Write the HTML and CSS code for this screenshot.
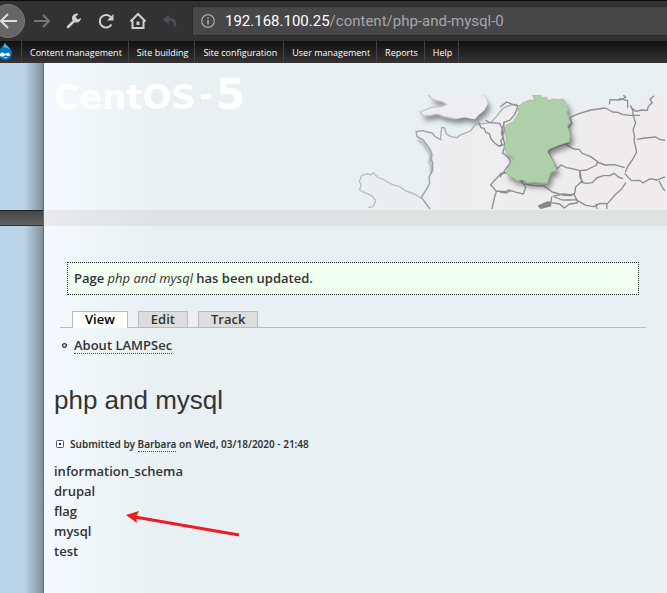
FILE: index.html
```html
<!DOCTYPE html>
<html lang="en">
<head>
<meta charset="utf-8">
<title>php and mysql</title>
<link rel="stylesheet" href="styles.css">
</head>
<body>
<div class="browser">
  <button class="tool back" aria-label="Back"><svg width="34" height="34" viewBox="0 0 34 34"><circle cx="17" cy="17" r="16.5" fill="#666" stroke="#777"/><path d="M26 17H10M17 10l-7 7 7 7" fill="none" stroke="#ddd" stroke-width="2"/></svg></button>
  <button class="tool" aria-label="Forward"><svg width="18" height="18" viewBox="0 0 18 18"><path d="M1 9h15M10 3l6 6-6 6" fill="none" stroke="#77777a" stroke-width="2"/></svg></button>
  <button class="tool" aria-label="Tools"><svg width="18" height="18" viewBox="0 0 18 18"><path d="M3 15l7-7" stroke="#d0d0d2" stroke-width="2.500" stroke-linecap="round"/><path d="M13.500 2A4.500 4.500 0 1 0 16 6L13 7.500 10.500 5z" fill="#d0d0d2"/></svg></button>
  <button class="tool" aria-label="Reload"><svg width="18" height="18" viewBox="0 0 18 18"><path d="M14.500 12.500A6.300 6.300 0 1 1 13.500 4.700L15 6.500" fill="none" stroke="#d0d0d2" stroke-width="2"/><path d="M16.500 2v6.500H10z" fill="#d0d0d2"/></svg></button>
  <button class="tool" aria-label="Home"><svg width="18" height="18" viewBox="0 0 18 18"><path d="M1.500 9.500L9 2l7.500 7.500M3.500 8.500V16h11V8.500" fill="none" stroke="#d0d0d2" stroke-width="2"/><path d="M7.500 9.500h3V13h-3z" fill="#d0d0d2"/></svg></button>
  <button class="tool undo" aria-label="Undo"><svg width="16" height="16" viewBox="0 0 18 18"><path d="M3 7.500h7Q15.500 8 14.500 15" fill="none" stroke="#4b5158" stroke-width="3"/><path d="M1 7.500L8 2v11z" fill="#4b5158"/></svg></button>
  <div class="address">
    <svg width="14" height="14" viewBox="0 0 14 14"><circle cx="7" cy="7" r="6.300" fill="none" stroke="#aaa" stroke-width="1.200"/><path d="M7 6v4.500M7 3.200v1.600" stroke="#aaa" stroke-width="1.600"/></svg>
    <span class="url"><b>192.168.100.25</b>/content/php-and-mysql-0</span>
  </div>
</div>
<nav class="admin">
  <a class="drop" href="#" aria-label="Drupal"><svg width="16" height="18" viewBox="0 0 16 18"><path d="M8 1C9 4 15 6 15 11.500A7 6.500 0 0 1 1 11.500C1 6 7 5 8 1z" fill="#0077c0"/><path d="M8 1C9 4 12 5 13 7L6 5z" fill="#56b3e6"/><path d="M3 13c0-3 3-3 5-1 2-1.500 4.500-2 5 .5.200 2-2.500 2-4.500.5C6.500 15 3 15 3 13zM6 15.500q3 1.500 5-.3" fill="#fff"/></svg></a>
  <a href="#">Content management</a>
  <a href="#">Site building</a>
  <a href="#">Site configuration</a>
  <a href="#">User management</a>
  <a href="#">Reports</a>
  <a href="#">Help</a>
</nav>
<div class="site">
  <header class="header">
    <a class="logo" href="#">CentOS<span class="dash"></span><span class="five">5</span></a>
    <svg class="map" width="310" height="115" viewBox="15 30 930 345">
      <defs>
        <filter id="shade" x="-20%" y="-20%" width="150%" height="150%"><feDropShadow dx="8" dy="14" stdDeviation="8" flood-color="#444" flood-opacity=".6"/></filter>
        <filter id="soft"><feGaussianBlur stdDeviation="3"/></filter>
        <linearGradient id="land"><stop offset="0" stop-color="#e9eff2"/><stop offset=".4" stop-color="#eeedef"/><stop offset="1" stop-color="#f1ebec"/></linearGradient>
      </defs>
      <path fill="url(#land)" d="M25 372V295l7-24 18-5 25 3 20 14 29 14 23 7 19 13 25 9 22 11 13-20 12-22-2-18 10-20 1-24-6-12 4-14-7-16-21-28-17-8-3-15 20-3 13 4 16 3 8 11 20 10 4-38 9 2 5 18 14 8 18 3 8-7 32-13 16-20 22-2 24-4 17-18 10-14 12-12 20-8L500 62l50-32h65l40 66 50-28 60-10 40 12 100-40h40V372z"/>
      <g filter="url(#shade)"><path fill="#efedef" d="M235 30l15 15 25 5 15 8-18 7-28 2-34 14 10 12 20-2 22-4 20 8 34 7 28-5 30 6 12-14 17-13 10-20-6-16-14-13 2-7z"/></g>
      <path d="M204 164l16 12 18 26 5 14-4 14 6 14-1 20" fill="none" stroke="#888" stroke-width="8" opacity=".6" filter="url(#soft)"/>
      <g fill="none" stroke="#8a8f90" stroke-width="4" stroke-linejoin="round">
        <path stroke="#b8bdbf" d="M55 368l15-4 7-18-12-14-29-13-7-4 4-17-5-8 7-19 18-5 10 4 7-7 12 13 15 6 29 16 23 7 19 13 25 9 22 13"/>
        <path stroke="#9ca1a2" d="M240 372l-26-35 13-20 12-22-2-18 10-20 1-24-6-12 4-14-7-16-21-28-17-8-3-15 20-3 13 4 16 3 8 11 20 10"/>
        <path stroke="#a8adae" d="M271 165l4-38 9 2 5 18 14 8 18 3 8-7 32-13 16-20 22-2 24-4 17-18 10-14 12-12 20-8 20-2"/>
        <path d="M385 110l8 18 10 3 5 12 10 3 5 16 11 12 14 10 7-7-3-10 8-9-6-15 8-30M406 105l13 8 30 2 10 22-3 16M448 184l15-5M470 262l-18 5-21 22-9 11 10 10 7 10-5 15-8 37M438 318l28 2 14-6"/>
        <path stroke="#c0c4c5" d="M235 30l15 15 25 5 15 8-18 7-28 2-34 14 10 12 20-2 22-4 20 8 34 7"/>
        <path d="M450 66l20-15 20 8 14 4-10 26-15 17-18 6 2 26-5 14 7 30-7 22 18 14 6 14-22 30-10 14M450 265l18-3 15 5 17 0 5 18 25-2 24 5 25-1 10 5 7-10 4-19 14-7 7-6M510 285l12 14 5 8-7 20-20-5-17-5-15 7-18-3"/>
        <path d="M525 297l25 5 32 1 25 18 35 10 18 1 14-7 3-20 18-15-3-20-3-12M620 252l-13-27-13-25 14-10 25-9 26-9M620 252l14-12 15 8 14 2 27 7 20-2 30-15 2-11-20-14-25-10-10-12-17-1-21-13-9-7"/>
        <path d="M659 172l3-28-8-15 12-13-6-17 5-4 24-10 34-10 43-6 22 12 15 1 16 7 22 2 29 0M841 61l7 15 2 18 7 20-8 20 5 20-2 12 8 35-11 21-17 24-6 16M824 248l-31-9-27 1-25-9"/>
        <path d="M778 58l2-14 30 1 17-8-7-7M807 41l26 6v22M847 70l9 9 20-4 16 1 3-12 12-11-7-10 12-11M860 163l25-4 32-3 12 7 18 3M690 257l-1 18 10 17M824 265l20 22 25-1 10 8 22-13 20 4 20-8 23-5M927 287l8 17 10 14"/>
        <path d="M690 291l20 4 17-2 13-14 20-7 20 0 12-7 13 11 14 5M828 292l-13 20-17 15-26 29-22-1-18 10-24-4-27-15-10-20M770 356l1 16M738 356l3 16M608 334l31-7 30 3M605 335l-2 18 26 4 14 12 15-12 24-3-1-10-22 1-22 0-24-9"/>
      </g>
      <path fill="#888" d="M562 362l30-13 12 1v14l-32 8z"/>
      <g filter="url(#shade)"><path fill="#add0a9" stroke="#9bb49a" stroke-width="2" d="M548 30h22l7 10 12-3 5 11 18-6 14 2 14-2 12 20 3 12-5 8 10 28-9 12 11 24-3 24-26 8-39 16-1 8 18 30 9 23-18 8-7 22-4 10-36-3-25 1-10-9-17 3-35-21 10-26 15-20-20-14-10-18 8-30-8-14 6-24 18-8 20-28-4-18 14-12 20-8 18 1z"/></g>
    </svg>
  </header>
  <div class="band"></div>
  <main class="content">
    <div class="status">Page <em>php and mysql</em> has been updated.</div>
    <ul class="tabs">
      <li><a class="active" href="#">View</a></li>
      <li><a href="#">Edit</a></li>
      <li><a href="#">Track</a></li>
    </ul>
    <ul class="book"><li><a href="#">About LAMPSec</a></li></ul>
    <h1>php and mysql</h1>
    <p class="submitted"><svg width="8" height="8" viewBox="0 0 8 8"><rect x=".5" y=".5" width="7" height="7" rx="1" fill="none" stroke="#555"/><path d="M3 3h2v2H3z" fill="#222"/></svg><span>Submitted by <a href="#">Barbara</a> on Wed, 03/18/2020 - 21:48</span></p>
    <div class="result">
      <ul class="list">
        <li>information_schema</li>
        <li>drupal</li>
        <li>flag</li>
        <li>mysql</li>
        <li>test</li>
      </ul>
      <svg class="arrow" width="116" height="28" viewBox="0 0 116 28"><path d="M113 24L9 6" stroke="#ed1c24" stroke-width="3"/><path d="M0 4l13-4-3 6 1 6z" fill="#ed1c24"/></svg>
    </div>
  </main>
</div>
</body>
</html>
```
FILE: styles.css
```css
* { box-sizing: border-box; }
body {
  margin: 0;
  min-height: 100vh;
  display: flex;
  flex-direction: column;
  overflow-x: hidden;
  font: 600 13px/20px "Open Sans", "Noto Sans", sans-serif;
  color: #333;
}
ul, p, h1 { margin: 0; padding: 0; }
ul { list-style: none; }
a { color: inherit; text-decoration: none; }
svg { display: block; flex: none; }
em { font-weight: 400; }

.browser {
  display: flex;
  align-items: center;
  gap: 14px;
  height: 41px;
  background: #323234;
  border-top: 1px solid #0c0c0d;
}
.tool { flex: none; padding: 0; border: 0; background: none; }
.back { margin-left: -9px; margin-right: -6px; }
.undo { margin-left: 1px; }
.address {
  flex: 1;
  display: flex;
  align-items: center;
  gap: 10px;
  height: 30px;
  padding-left: 8px;
  background: #474749;
  border: 1px solid #2a2a2c;
  border-right: 0;
}
.url { font: 400 15px/20px Roboto, sans-serif; color: #a6a6a8; white-space: nowrap; }
.url b { font-weight: 400; color: #fff; }

.admin {
  display: flex;
  height: 22px;
  background: linear-gradient(#101010, #363434);
  color: #fff;
  font: 400 9px/23px "Open Sans", sans-serif;
  white-space: nowrap;
}
.admin a { padding: 0 6px 0 8px; border-right: 1px solid #444; }
.admin .drop { width: 22px; padding: 1px 0 0; }
.drop svg { margin-left: -3px; }

.site {
  flex: 1;
  background: linear-gradient(to right, #bad5e9 24px, #829099 43px, #5e6b72 43px, #5e6b72 44px, #f4faff 44px, #e8f0f3 160px);
}
.header {
  display: flex;
  justify-content: space-between;
  align-items: flex-end;
  height: 147px;
  padding: 0 2px 0 54px;
}
.logo {
  display: flex;
  align-self: flex-start;
  align-items: baseline;
  margin-top: 12px;
  font: 700 34px/40px "DejaVu Sans", sans-serif;
  color: #fff;
}
.dash { align-self: center; width: 10px; height: 5px; margin: 0 5px; background: #fff; }
.five { font-size: 42px; }
.band {
  height: 16px;
  background:
    linear-gradient(#222, #222) 0 0 / 43px 1px no-repeat,
    linear-gradient(#444, #626262 15px, #333 15px) 0 0 / 43px 16px no-repeat,
    linear-gradient(to right, #5e6b72 44px, #e8eaeb 44px, #dfe2e3 160px);
}
.content { padding: 36px 21px 20px 54px; }
.status {
  margin: 0 7px 0 13px;
  padding: 5px 6px 6px;
  background: #f0fff0;
  border: 1px dotted #222;
}
.tabs {
  display: flex;
  gap: 10px;
  margin: 16px 0 9px 6px;
  padding-left: 12px;
  border-bottom: 1px solid #bbb;
}
.tabs a {
  display: block;
  padding: 0 12px;
  line-height: 15px;
  background: #ddd;
  border: 1px solid #bbb;
  border-bottom: 0;
}
.tabs .active { margin-bottom: -1px; padding-bottom: 1px; background: #fff; color: #000; }
.book li { display: flex; align-items: center; gap: 7px; padding-left: 8px; }
.book li::before { content: ""; width: 3px; height: 3px; border: 1px solid #111; border-radius: 50%; background: #bbb; }
.book a, .submitted a { border-bottom: 1px dotted #555; }
.book a { line-height: 16px; }
h1 { margin-top: 30px; font: 400 26px/32px "Liberation Sans", sans-serif; }
.submitted {
  display: flex;
  align-items: center;
  gap: 6px;
  margin-top: 18px;
  padding-left: 2px;
  font: 600 10px/20px "Noto Sans", sans-serif;
}
.result { display: flex; gap: 4px; margin-top: 7px; }
.list { width: 68px; white-space: nowrap; }
.arrow { margin-top: 50px; }
```
